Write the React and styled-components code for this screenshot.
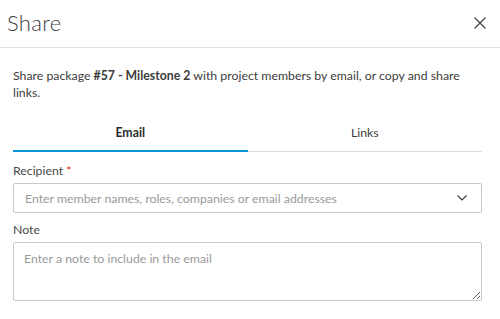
import React, { useState } from 'react';
import styled, { createGlobalStyle } from 'styled-components';

const GlobalStyle = createGlobalStyle`
  html, body {
    margin: 0;
    padding: 0;
    background: #fff;
  }
  body {
    font-family: Lato, "Noto Sans", sans-serif;
    color: #3c3c3c;
  }
  * { box-sizing: border-box; }
`;

const Dialog = styled.div`
  width: 500px;
  height: 319px;
  background: #fff;
  overflow: hidden;
`;

const Header = styled.header`
  height: 48px;
  display: flex;
  align-items: center;
  justify-content: space-between;
  padding: 0 14px 2px 7px;
  border-bottom: 1px solid #e2e2e2;
`;

const Title = styled.h1`
  margin: 0;
  font-size: 22px;
  font-weight: 300;
  color: #3c3c3c;
  letter-spacing: 0.3px;
`;

const CloseButton = styled.button`
  border: 0;
  background: none;
  padding: 0;
  width: 12px;
  height: 12px;
  display: flex;
  cursor: pointer;
`;

const Body = styled.div`
  padding: 19px 18px 0 13px;
`;

const Description = styled.p`
  margin: 0;
  font-size: 12.3px;
  line-height: 17px;
  color: #3c3c3c;
  b { font-weight: 700; }
`;

const TabList = styled.div`
  margin-top: 18px;
  display: grid;
  grid-template-columns: 1fr 1fr;
  border-bottom: 1px solid #dcdcdc;
`;

const Tab = styled.button`
  height: 33px;
  border: 0;
  background: none;
  font-family: inherit;
  font-size: 12.3px;
  font-weight: ${p => (p.$active ? 700 : 400)};
  color: ${p => (p.$active ? '#2c2c2c' : '#3c3c3c')};
  padding: 0 0 4px;
  margin-bottom: -1px;
  border-bottom: 2px solid ${p => (p.$active ? '#0696d7' : 'transparent')};
  cursor: pointer;
`;

const Field = styled.div`
  display: flex;
  flex-direction: column;
  gap: 4px;
  margin-top: ${p => p.$top || 0}px;
`;

const Label = styled.label`
  font-size: 12.3px;
  line-height: 17px;
  color: #4a4a4a;
  span { color: #dd2222; }
`;

const SelectBox = styled.div`
  height: 30px;
  border: 1px solid #c8c8c8;
  border-radius: 2px;
  display: flex;
  align-items: center;
  justify-content: space-between;
  padding: 0 14px 0 11px;
  font-size: 12.3px;
  color: #9a9a9a;
`;

const NoteArea = styled.textarea`
  height: 59px;
  resize: vertical;
  border: 1px solid #c8c8c8;
  border-radius: 2px;
  padding: 7px 10px;
  font-family: inherit;
  font-size: 12.3px;
  line-height: 17px;
  color: #3c3c3c;
  &::placeholder { color: #9a9a9a; }
`;

export default function App() {
  const [tab, setTab] = useState('email');
  return (
    <Dialog>
      <GlobalStyle />
      <Header>
        <Title>Share</Title>
        <CloseButton aria-label="Close">
          <svg width="12" height="12" viewBox="0 0 12 12">
            <path d="M0.5 0.5 L11.5 11.5 M11.5 0.5 L0.5 11.5" stroke="#3c3c3c" strokeWidth="1.1" fill="none" />
          </svg>
        </CloseButton>
      </Header>
      <Body>
        <Description>
          Share package <b>#57 - Milestone 2</b> with project members by email, or copy and share links.
        </Description>
        <TabList>
          <Tab $active={tab === 'email'} onClick={() => setTab('email')}>Email</Tab>
          <Tab $active={tab === 'links'} onClick={() => setTab('links')}>Links</Tab>
        </TabList>
        <Field $top={10}>
          <Label>Recipient <span>*</span></Label>
          <SelectBox>
            Enter member names, roles, companies or email addresses
            <svg width="10" height="6" viewBox="0 0 10 6">
              <path d="M0.5 0.5 L5 5 L9.5 0.5" stroke="#3c3c3c" strokeWidth="1.2" fill="none" />
            </svg>
          </SelectBox>
        </Field>
        <Field $top={8}>
          <Label>Note</Label>
          <NoteArea placeholder="Enter a note to include in the email" />
        </Field>
      </Body>
    </Dialog>
  );
}
